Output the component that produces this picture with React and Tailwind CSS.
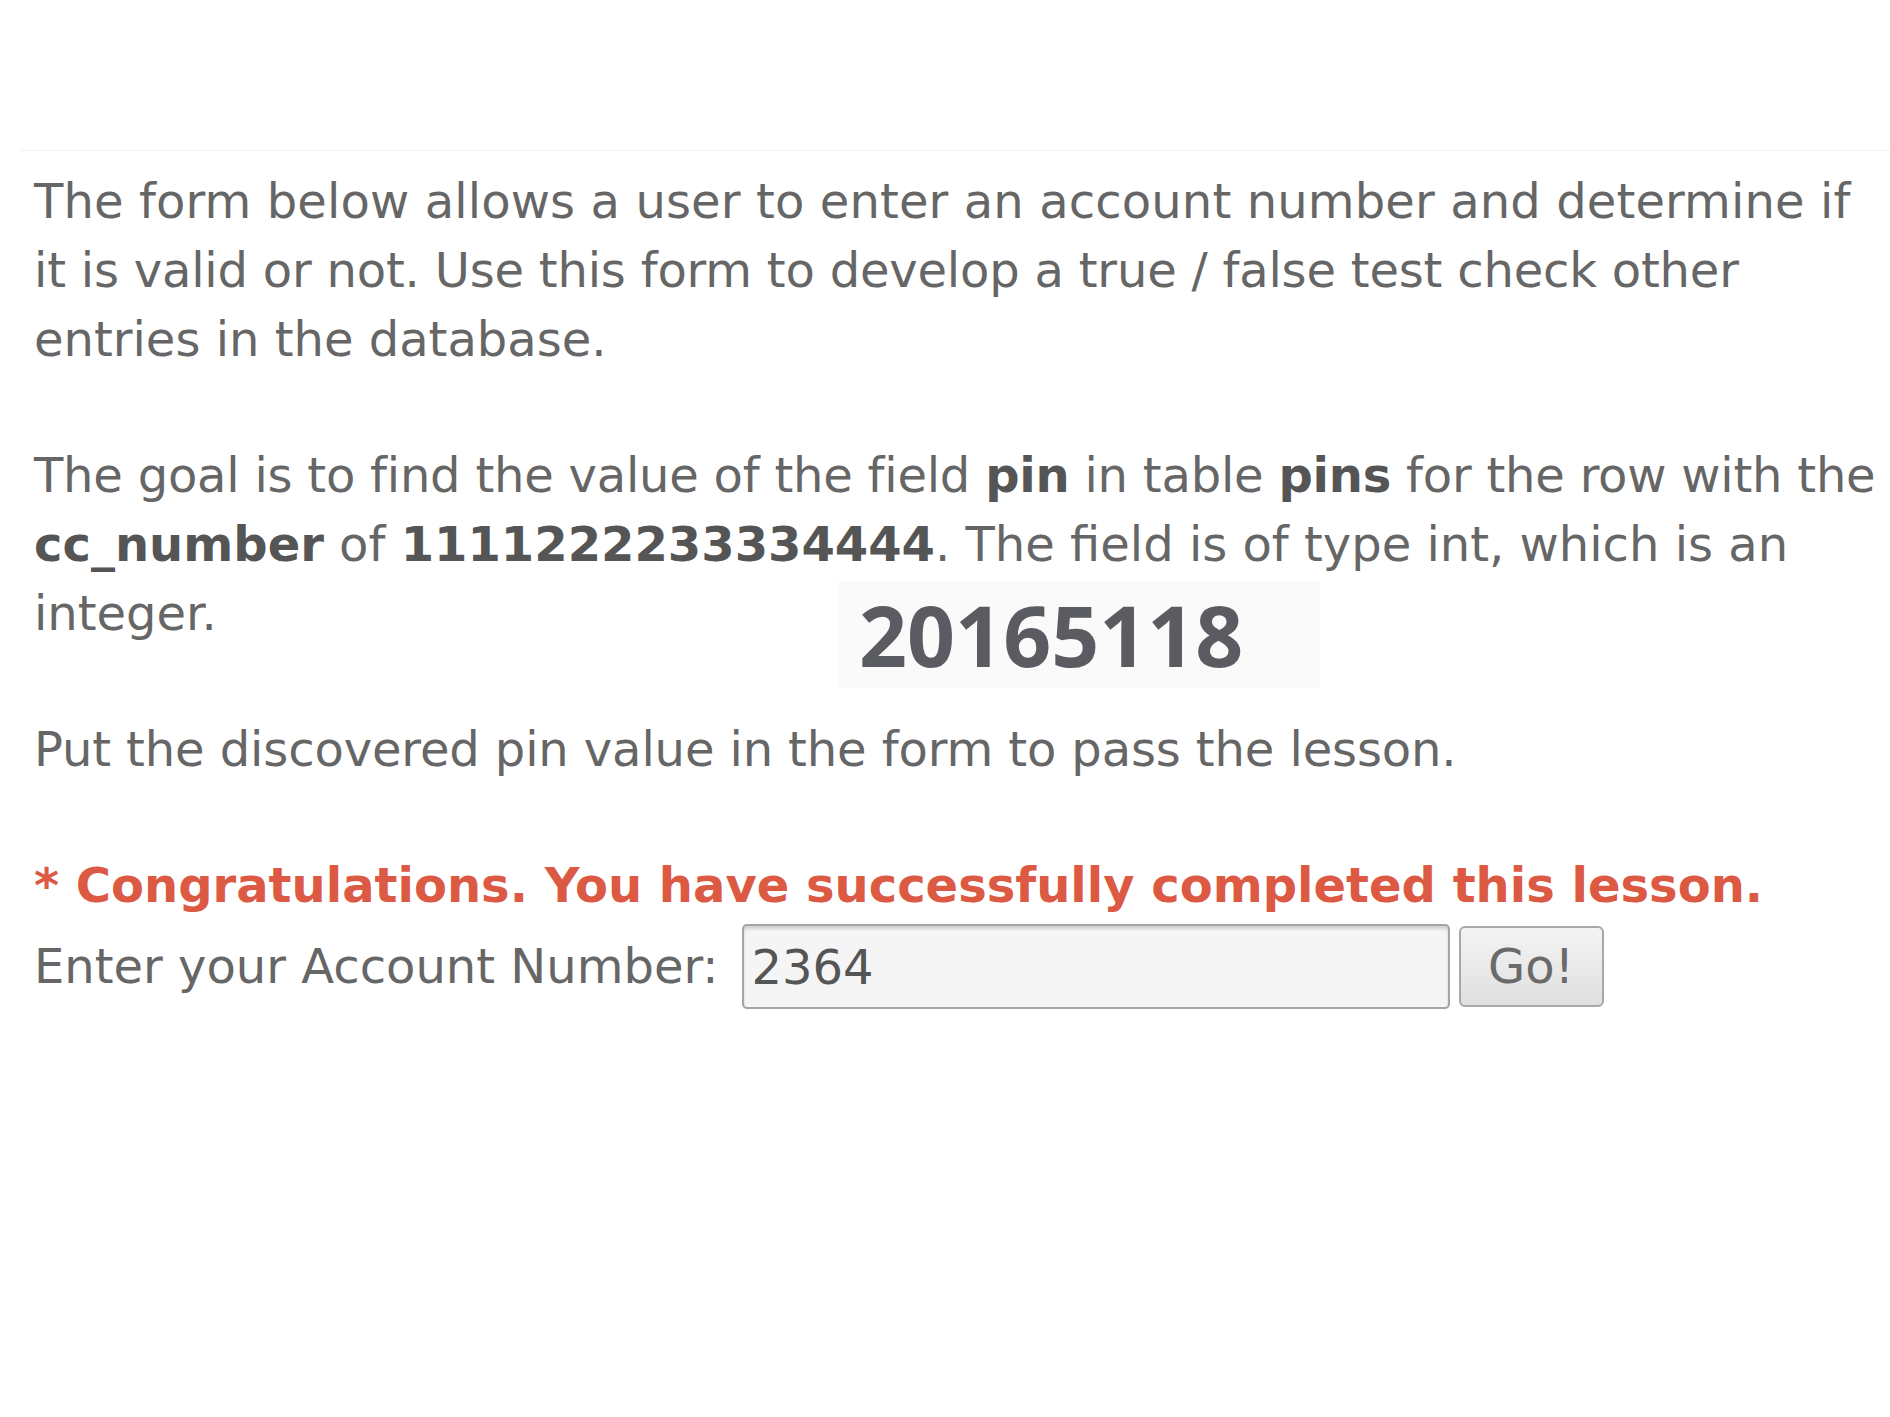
import React from "react";

export default function App() {
  return (
    <div className="w-[1890px] h-[1417px] bg-white relative overflow-hidden" style={{ fontFamily: '"DejaVu Sans", sans-serif' }}>
      <div className="pt-[150px] pl-[19px]">
        <div className="border-t border-[#f2f2f2] pl-[15px] pt-[16px] text-[48px] leading-[69px] text-[#666] whitespace-nowrap">
          <p className="mb-[67px]">
            <span className="tracking-[0.12px]">The form below allows a user to enter an account number and determine if</span>
            <br />
            <span className="tracking-[-0.2px]">it is valid or not. Use this form to develop a true / false test check other</span>
            <br />
            entries in the database.
          </p>
          <p className="mb-[67px] tracking-[-0.22px]">
            The goal is to find the value of the field <b className="text-[#555]">pin</b> in table{" "}
            <b className="text-[#555]">pins</b> for the row with the
            <br />
            <span className="tracking-normal">
              <b className="text-[#555]">cc_number</b> of <b className="text-[#555]">1111222233334444</b>. The field is of type int, which is an
            </span>
            <br />
            <span className="tracking-normal">integer.</span>
          </p>
          <p className="mb-[67px] tracking-[-0.12px]">Put the discovered pin value in the form to pass the lesson.</p>
          <p className="font-bold text-[#dc5a44] text-[48px] leading-[69px]">
            * Congratulations. You have successfully completed this lesson.
          </p>
          <form className="flex items-center mt-[4px]" onSubmit={(e) => e.preventDefault()}>
            <span className="mr-[23px]">Enter your Account Number:</span>
            <input
              type="text"
              defaultValue="2364"
              className="w-[708px] h-[85px] border-2 border-[#a4a4a4] rounded-[5px] bg-[#f5f5f5] px-[8px] text-[48px] text-[#555] shadow-[inset_0_3px_3px_rgba(0,0,0,0.15)] outline-none"
              style={{ fontFamily: '"DejaVu Sans", sans-serif' }}
            />
            <button
              type="submit"
              className="ml-[9px] w-[145px] h-[81px] border-2 border-[#a8a8a8] rounded-[6px] bg-gradient-to-b from-[#f3f3f3] to-[#e0e0e0] text-[48px] text-[#6a6a6a]"
              style={{ fontFamily: '"DejaVu Sans", sans-serif' }}
            >
              Go!
            </button>
          </form>
        </div>
      </div>
      <div className="absolute left-[838px] top-[581px] w-[482px] h-[107px] bg-[#fafafa] flex items-center pl-[21px]">
        <span className="font-bold text-[84px] leading-none text-[#5b5c61]" style={{ fontFamily: '"Noto Sans", sans-serif' }}>
          20165118
        </span>
      </div>
    </div>
  );
}
